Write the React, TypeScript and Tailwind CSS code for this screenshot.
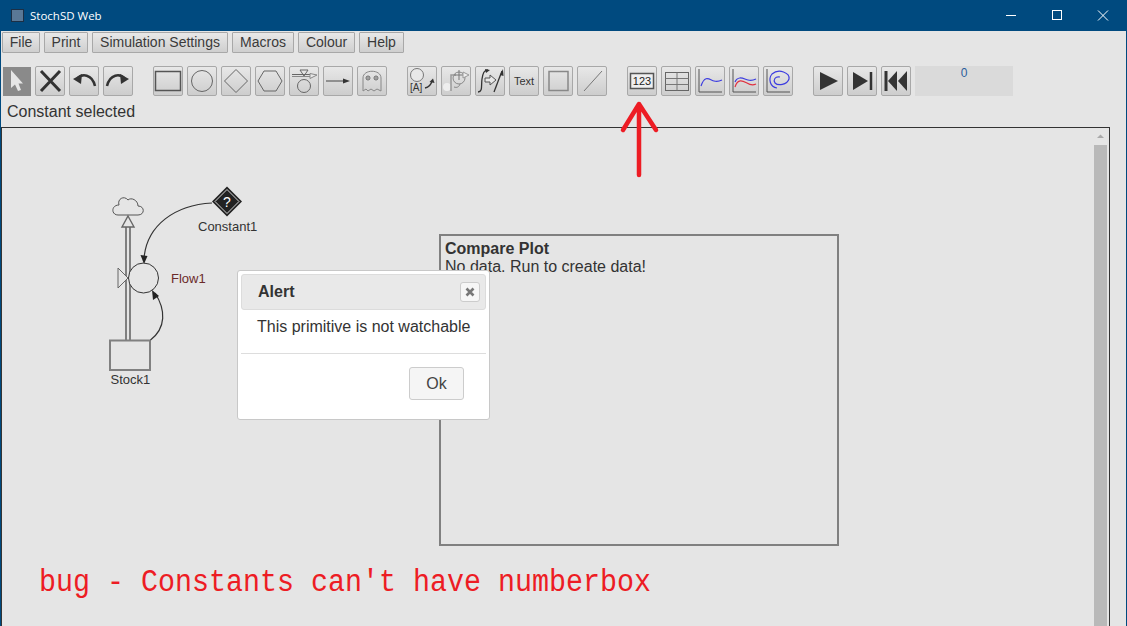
import type { ReactNode } from "react";

const sans = "font-['Liberation_Sans',Arial,sans-serif]";

function ToolBtn({ children }: { children: ReactNode }) {
  return (
    <button className="flex h-[30px] w-[30px] items-center justify-center rounded-[2px] border border-[#a8a8a8] bg-gradient-to-b from-[#e8e8e8] to-[#cdcdcd]">
      <svg width="28" height="28" viewBox="0 0 28 28" fill="none">
        {children}
      </svg>
    </button>
  );
}

function MenuBtn({ label, width }: { label: string; width: string }) {
  return (
    <button
      className={`${width} h-[21px] rounded-[1px] border border-[#a8a8a8] bg-gradient-to-b from-[#e8e8e8] to-[#cfcfcf] text-center text-[14px] leading-[19px] text-[#3a3a3a]`}
    >
      {label}
    </button>
  );
}

function Axes() {
  return <path d="M3 2V25H26" stroke="#555" strokeWidth="1" />;
}

export default function App() {
  return (
    <div className={`${sans} flex h-[626px] w-[1127px] flex-col overflow-hidden border-x border-[#004a7f] bg-[#e5e5e5]`}>
      {/* title bar */}
      <div className="flex h-[31px] shrink-0 items-center bg-[#004a7f] text-white">
        <div className="ml-[10px] h-[13px] w-[13px] border border-[#1c2f45] bg-[#5a7896]" />
        <span className="ml-[6px] font-['Open_Sans',sans-serif] text-[11.5px]">StochSD Web</span>
        <div className="ml-auto flex items-center">
          <svg width="138" height="31" viewBox="0 0 138 31" fill="none" stroke="#fff">
            <path d="M18 15.5H28" />
            <rect x="64.5" y="10.5" width="9" height="9" strokeWidth="1" />
            <path d="M110 10.5L120 20.5M120 10.5L110 20.5" />
          </svg>
        </div>
      </div>

      {/* menu */}
      <div className="ml-[1px] mt-[1px] flex shrink-0 gap-[4px]">
        <MenuBtn label="File" width="w-[38px]" />
        <MenuBtn label="Print" width="w-[44px]" />
        <MenuBtn label="Simulation Settings" width="w-[136px]" />
        <MenuBtn label="Macros" width="w-[62px]" />
        <MenuBtn label="Colour" width="w-[57px]" />
        <MenuBtn label="Help" width="w-[45px]" />
      </div>

      {/* toolbar */}
      <div className="ml-[1px] mt-[13px] flex h-[30px] shrink-0 items-center">
        <button className="ml-[1px] flex h-[29px] w-[28px] items-center justify-center bg-[#8a8a8a]">
          <svg width="28" height="28" viewBox="0 0 28 28" fill="none">
            <path d="M8 3V21L12 17.5L15 24L18 23L15.5 16.5H20Z" fill="#e6e6e6" />
          </svg>
        </button>
        <div className="ml-[4px] flex gap-[4px]">
          <ToolBtn>
            <path d="M5 4L24 24M24 4L5 24" stroke="#333" strokeWidth="3" />
          </ToolBtn>
          <ToolBtn>
            <path d="M7 12C12 6 22 7 25 19" stroke="#333" strokeWidth="2.5" />
            <path d="M3 12L12 7L11 17Z" fill="#333" />
          </ToolBtn>
          <ToolBtn>
            <path d="M21 12C16 6 6 7 3 19" stroke="#333" strokeWidth="2.5" />
            <path d="M25 12L16 7L17 17Z" fill="#333" />
          </ToolBtn>
        </div>
        <div className="ml-[20px] flex gap-[4px]">
          <ToolBtn>
            <rect x="1.5" y="4.5" width="25" height="19" stroke="#555" strokeWidth="1.5" />
          </ToolBtn>
          <ToolBtn>
            <circle cx="14" cy="14" r="10.5" stroke="#666" />
          </ToolBtn>
          <ToolBtn>
            <path d="M14 2.5L25.5 14L14 25.5L2.5 14Z" stroke="#666" />
          </ToolBtn>
          <ToolBtn>
            <path d="M8 4H20L26 14L20 24H8L2 14Z" stroke="#666" />
          </ToolBtn>
          <ToolBtn>
            <circle cx="14" cy="19" r="6.5" stroke="#666" />
            <path d="M10 3H18L14 9ZM2 7.5H21" stroke="#666" />
            <path d="M2 9.5H20V6.5L27 8L20 11.5V9.5" stroke="#888" fill="#e8e8e8" />
          </ToolBtn>
          <ToolBtn>
            <path d="M2 14H22" stroke="#444" />
            <path d="M19 11.5L26 14L19 16.5Z" fill="#333" />
          </ToolBtn>
          <ToolBtn>
            <path d="M5 24V11C5 2 23 2 23 11V24L19 22L16 24L13 22L10 24L8 22Z" stroke="#888" />
            <circle cx="10" cy="11" r="2" stroke="#666" />
            <circle cx="18" cy="11" r="2" stroke="#666" />
            <circle cx="10" cy="11" r="0.7" fill="#333" />
            <circle cx="18" cy="11" r="0.7" fill="#333" />
          </ToolBtn>
        </div>
        <div className="ml-[20px] flex gap-[4px]">
          <ToolBtn>
            <circle cx="9" cy="8" r="6.5" stroke="#777" fill="#e8e8e8" />
            <text x="2" y="24" fontSize="10" fill="#333" fontFamily="Liberation Sans">[A]</text>
            <path d="M17 21C21 20 23 18 24 14" stroke="#333" strokeWidth="1.3" />
            <path d="M21.5 15L25 11.5L26.5 16Z" fill="#333" />
          </ToolBtn>
          <ToolBtn>
            <circle cx="5" cy="20" r="4" fill="#eee" />
            <circle cx="17" cy="11" r="6" stroke="#888" />
            <path d="M9 24V8H14" stroke="#999" strokeWidth="1.5" />
            <path d="M17 3V13M12 8H22" stroke="#777" />
            <path d="M21 5L27 8L21 11Z" stroke="#999" fill="#eee" />
            <path d="M12 20C15 21 17 20 18 17" stroke="#888" />
          </ToolBtn>
          <ToolBtn>
            <path d="M2 25C7 25 5 18 6 12C7 6 8 3 12 3" stroke="#333" strokeWidth="1.3" />
            <path d="M9 2L14 3L10 6Z" fill="#333" />
            <path d="M9 11H14V8L20 13L14 18V15H9Z" stroke="#555" fill="#e8e8e8" />
            <path d="M18 25L26 4" stroke="#333" strokeWidth="1.3" />
            <path d="M24 8L27 2L27.5 9Z" fill="#333" />
          </ToolBtn>
          <ToolBtn>
            <text x="14" y="18" textAnchor="middle" fontSize="11" fill="#333" fontFamily="Liberation Sans">Text</text>
          </ToolBtn>
          <ToolBtn>
            <rect x="5" y="4.5" width="19" height="19" stroke="#888" strokeWidth="1.5" />
          </ToolBtn>
          <ToolBtn>
            <path d="M6 24L24 4" stroke="#777" />
          </ToolBtn>
        </div>
        <div className="ml-[20px] flex gap-[4px]">
          <ToolBtn>
            <rect x="2.5" y="6.5" width="23" height="15" stroke="#555" strokeWidth="1.5" fill="#efefef" />
            <text x="14" y="18" textAnchor="middle" fontSize="11" fill="#222" fontFamily="Liberation Sans">123</text>
          </ToolBtn>
          <ToolBtn>
            <rect x="3.5" y="5.5" width="23" height="18" stroke="#666" />
            <path d="M3.5 11.5H26.5M3.5 17.5H26.5M15 5.5V23.5" stroke="#777" />
          </ToolBtn>
          <ToolBtn>
            <Axes />
            <path d="M5 19C9 7 14 13 18 14C21 15 24 14 26 13" stroke="#3c3ce0" strokeWidth="1.2" />
          </ToolBtn>
          <ToolBtn>
            <Axes />
            <path d="M5 15C8 8 14 12 18 13C21 14 24 13 26 12" stroke="#3c3ce0" strokeWidth="1.2" />
            <path d="M5 20C8 11 13 14 17 16C20 18 24 18 26 17" stroke="#e03040" strokeWidth="1.2" />
          </ToolBtn>
          <ToolBtn>
            <Axes />
            <path d="M16 10C11 9 9 13 11 16C14 19 23 18 25 12C26 6 15 1 8 7C4 12 6 20 13 21" stroke="#3c3ce0" strokeWidth="1.2" />
          </ToolBtn>
        </div>
        <div className="ml-[20px] flex gap-[4px]">
          <ToolBtn>
            <path d="M6 5L24 14L6 23Z" fill="#333" />
          </ToolBtn>
          <ToolBtn>
            <path d="M5 5L20 14L5 23Z" fill="#333" />
            <path d="M23 5V23" stroke="#333" strokeWidth="2.5" />
          </ToolBtn>
          <ToolBtn>
            <path d="M4 4V24" stroke="#333" strokeWidth="3" />
            <path d="M15 4L6 14L15 24Z" fill="#333" />
            <path d="M25 4L16 14L25 24Z" fill="#333" />
          </ToolBtn>
        </div>
        <div className="ml-[4px] h-[30px] w-[98px] bg-[#dadada] pt-[1px] text-center text-[12px] leading-[13px] text-[#2a5d9c]">0</div>
      </div>

      {/* status */}
      <div className="ml-[6px] mt-[6px] h-[25px] shrink-0 text-[16px] leading-[20px] text-[#333]">Constant selected</div>

      {/* canvas */}
      <div className="relative mr-[16px] flex-1 border-l border-r border-t border-[#333]">
        <svg className="absolute left-[-2px] top-[-128px] h-[626px] w-[1127px]" viewBox="0 0 1127 626" fill="none">
          {/* cloud */}
          <path d="M118 215H138C145 215 145 206 138 206C138 200 131 197 128 200C124 195 117 199 119 205C111 205 111 215 118 215Z" stroke="#555" fill="#e5e5e5" />
          {/* flow pipe */}
          <path d="M126 340V227M130 340V227" stroke="#808080" strokeWidth="2" />
          <path d="M128 216L134 227H122Z" stroke="#666" strokeWidth="1.4" fill="#e5e5e5" />
          <path d="M118 268V288L128 278Z" stroke="#666" fill="#e5e5e5" />
          <circle cx="143.5" cy="278" r="15" stroke="#333" fill="#e5e5e5" />
          <rect x="110" y="340.5" width="40" height="29.5" stroke="#808080" strokeWidth="2" fill="#e5e5e5" />
          {/* links */}
          <path d="M212 203C175 205 147 225 144 258" stroke="#333" strokeWidth="1.2" />
          <path d="M144 264L140.5 255L147.5 256Z" fill="#222" />
          <path d="M150.5 340C166 328 166 310 155 293" stroke="#333" strokeWidth="1.2" />
          <path d="M152 290L159 296L153 300Z" fill="#222" />
          {/* constant */}
          <path d="M227 186.5L242 201.5L227 216.5L212 201.5Z" fill="#222" />
          <path d="M227 189.5L239 201.5L227 213.5L215 201.5Z" stroke="#fff" strokeWidth="0.8" />
          <text x="227" y="206.5" textAnchor="middle" fontSize="14" fill="#fff" fontFamily="Liberation Sans">?</text>
          <text x="198" y="231" fontSize="13" fill="#333" fontFamily="Liberation Sans">Constant1</text>
          <text x="171" y="283" fontSize="13" fill="#6b2a2a" fontFamily="Liberation Sans">Flow1</text>
          <text x="110.5" y="384" fontSize="13" fill="#333" fontFamily="Liberation Sans">Stock1</text>
          {/* red annotation arrow */}
          <path d="M639 175V106M623 130L639 104L656 130" stroke="#ed1c24" strokeWidth="4.5" strokeLinecap="round" strokeLinejoin="round" />
        </svg>

        {/* compare plot */}
        <div className="absolute left-[437px] top-[106px] h-[312px] w-[400px] border-2 border-[#808080] px-[4px] py-[4px] text-[16px] leading-[18px] text-[#333]">
          <div className="font-bold">Compare Plot</div>
          <div>No data. Run to create data!</div>
        </div>

        {/* alert */}
        <div className="absolute left-[235px] top-[142px] h-[150px] w-[253px] rounded-[3px] border border-[#c8c8c8] bg-white p-[3px]">
          <div className="flex h-[36px] items-center justify-between rounded-[3px] border border-[#dcdcdc] bg-[#e9e9e9] pl-[16px] pr-[5px]">
            <span className="text-[16px] font-bold text-[#333]">Alert</span>
            <button className="flex h-[20px] w-[20px] items-center justify-center rounded-[3px] border border-[#ccc] bg-[#f6f6f6]">
              <svg width="10" height="10" viewBox="0 0 10 10">
                <path d="M1.5 1.5L8.5 8.5M8.5 1.5L1.5 8.5" stroke="#777" strokeWidth="2.6" />
              </svg>
            </button>
          </div>
          <div className="h-[44px] border-b border-[#dddddd] pl-[16px] pt-[7px] text-[16px] leading-[20px] text-[#333]">This primitive is not watchable</div>
          <div className="flex justify-end pr-[22px] pt-[13px]">
            <button className="h-[33px] w-[55px] rounded-[3px] border border-[#ccc] bg-[#f5f5f5] text-[16px] text-[#444]">Ok</button>
          </div>
        </div>

        {/* annotation text */}
        <div className="absolute left-[37px] top-[436px] origin-left scale-x-[0.914] whitespace-pre font-['Liberation_Mono',monospace] text-[31px] leading-[38px] text-[#ed1c24]">
          bug - Constants can't have numberbox
        </div>

        {/* scrollbar */}
        <div className="absolute right-0 top-0 flex h-full w-[17px] flex-col items-center">
          <svg width="17" height="17" viewBox="0 0 17 17" className="shrink-0">
            <path d="M5 10L8.5 6.5L12 10Z" fill="#aaa" />
          </svg>
          <div className="h-full w-[13px] bg-[#b9b9b9]" />
        </div>
      </div>
    </div>
  );
}
